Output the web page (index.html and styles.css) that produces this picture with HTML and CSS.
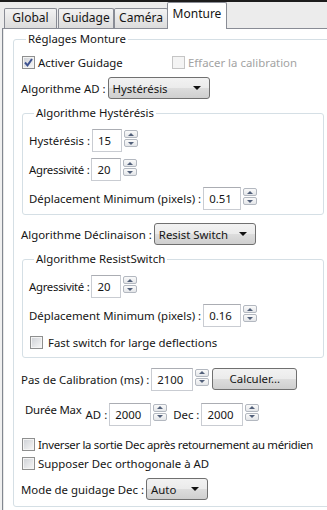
FILE: index.html
```html
<!DOCTYPE html>
<html lang="fr">
<head>
<meta charset="utf-8">
<title>Monture</title>
<link rel="stylesheet" href="styles.css">
</head>
<body>
<div class="window">
  <div class="topline"></div>
  <div class="tabbar">
    <div class="tab t-global">Global</div>
    <div class="tab t-guidage">Guidage</div>
    <div class="tab t-camera">Caméra</div>
    <div class="tab t-monture active">Monture</div>
  </div>
  <div class="pane">
    <fieldset class="group outer">
      <legend>Réglages Monture</legend>

      <div class="chkrow r-activer">
        <label class="chk c-first"><span class="box"><svg width="11" height="11" viewBox="0 0 11 11"><path d="M2 5.5 L4.5 8.3 L9 2" fill="none" stroke="#3d5290" stroke-width="2"/></svg></span>Activer Guidage</label>
        <label class="chk disabled"><span class="box"></span>Effacer la calibration</label>
      </div>

      <div class="row r-ad">
        <span class="lbl">Algorithme AD :</span>
        <div class="combo w-ad"><span>Hystérésis</span><span class="arrow"></span></div>
      </div>

      <fieldset class="group inner g-hyst">
        <legend>Algorithme Hystérésis</legend>
        <div class="row r-first">
          <span class="lbl">Hystérésis :</span>
          <div class="spin"><div class="field w30">15</div><div class="sbtns"><span class="sb up"></span><span class="sb down"></span></div></div>
        </div>
        <div class="row r-next">
          <span class="lbl tight">Agressivité :</span>
          <div class="spin"><div class="field w30">20</div><div class="sbtns"><span class="sb up"></span><span class="sb down"></span></div></div>
        </div>
        <div class="row r-next">
          <span class="lbl">Déplacement Minimum (pixels) :</span>
          <div class="spin"><div class="field w38">0.51</div><div class="sbtns"><span class="sb up"></span><span class="sb down"></span></div></div>
        </div>
      </fieldset>

      <div class="row r-dec">
        <span class="lbl">Algorithme Déclinaison :</span>
        <div class="combo w-dec"><span>Resist Switch</span><span class="arrow"></span></div>
      </div>

      <fieldset class="group inner g-resist">
        <legend>Algorithme ResistSwitch</legend>
        <div class="row r-first">
          <span class="lbl tight">Agressivité :</span>
          <div class="spin"><div class="field w30">20</div><div class="sbtns"><span class="sb up"></span><span class="sb down"></span></div></div>
        </div>
        <div class="row r-next">
          <span class="lbl">Déplacement Minimum (pixels) :</span>
          <div class="spin"><div class="field w38">0.16</div><div class="sbtns"><span class="sb up"></span><span class="sb down"></span></div></div>
        </div>
        <div class="chkrow r-fast">
          <label class="chk wide"><span class="box"></span>Fast switch for large deflections</label>
        </div>
      </fieldset>

      <div class="row r-pas">
        <span class="lbl">Pas de Calibration (ms) :</span>
        <div class="spin"><div class="field w42">2100</div><div class="sbtns"><span class="sb up"></span><span class="sb down"></span></div></div>
        <div class="button">Calculer...</div>
      </div>

      <div class="row r-duree">
        <span class="lbl duree">Durée Max</span>
        <span class="lbl">AD :</span>
        <div class="spin"><div class="field w42">2000</div><div class="sbtns"><span class="sb up"></span><span class="sb down"></span></div></div>
        <span class="lbl dec">Dec :</span>
        <div class="spin"><div class="field w42">2000</div><div class="sbtns"><span class="sb up"></span><span class="sb down"></span></div></div>
      </div>

      <div class="chkrow r-inv">
        <label class="chk narrow"><span class="box"></span>Inverser la sortie Dec après retournement au méridien</label>
      </div>
      <div class="chkrow r-sup">
        <label class="chk"><span class="box"></span>Supposer Dec orthogonale à AD</label>
      </div>

      <div class="row r-mode">
        <span class="lbl">Mode de guidage Dec :</span>
        <div class="combo w-mode"><span>Auto</span><span class="arrow"></span></div>
      </div>
    </fieldset>
  </div>
</div>
</body>
</html>
```
FILE: styles.css
```css
* { box-sizing: border-box; }

html, body {
  margin: 0;
  padding: 0;
}

body {
  width: 327px;
  height: 510px;
  overflow: hidden;
  background: #f0f0f0;
  font-family: "Noto Sans", "Open Sans", sans-serif;
  font-size: 11.4px;
  color: #151515;
}

.window {
  width: 327px;
  height: 510px;
  overflow: hidden;
}

.topline {
  height: 2px;
  background: #1c1c1c;
}

.tabbar {
  height: 26px;
  display: flex;
  align-items: flex-end;
  background: #ececec;
}

.tab {
  height: 20px;
  line-height: 18px;
  text-align: center;
  border: 1px solid #898c95;
  border-bottom: none;
  background: linear-gradient(#f3f3f3, #e7e7e7 50%, #dcdcdc);
  border-radius: 2px 2px 0 0;
  font-size: 12px;
}

.t-global { margin-left: 4px; width: 53px; }
.t-guidage { margin-left: 1px; width: 56px; }
.t-camera { width: 54px; }

.tab.active {
  position: relative;
  z-index: 1;
  margin-left: -1px;
  width: 60px;
  height: 27px;
  line-height: 22px;
  margin-bottom: -1px;
  background: #ffffff;
}

.pane {
  margin-left: 2px;
  height: 490px;
  background: #ffffff;
  border-top: 1px solid #898c95;
  border-left: 1px solid #828790;
  box-shadow: inset 1px 0 0 #e8e8e8;
}

fieldset.group {
  border: 1px solid #d5dfe5;
  border-radius: 3px;
  min-width: 0;
}

fieldset.group > legend {
  padding: 0 2px;
  margin-left: 5px;
  line-height: 16px;
}

fieldset.outer {
  margin: 2px 0 0 10px;
  width: 340px;
  padding: 7px 0 6px 7px;
}

fieldset.inner {
  margin: 6px 0 0 1px;
  width: 302px;
  padding: 8px 0 4px 6px;
}

fieldset.g-resist { padding-bottom: 7px; }

.row {
  display: flex;
  align-items: center;
  height: 23px;
}

.chkrow {
  display: flex;
  align-items: center;
  height: 16px;
}

.r-ad { margin-top: 7px; height: 22px; }
.r-next { margin-top: 6px; }
.r-dec { margin-top: 8px; height: 22px; }
.r-fast { margin-top: 7px; }
.r-pas { margin-top: 10px; height: 22px; }
.r-duree { margin-top: 12px; height: 24px; }
.r-inv { margin-top: 10px; }
.r-sup { margin-top: 3px; }
.r-mode { margin-top: 7px; height: 22px; }

.lbl {
  white-space: nowrap;
  margin-right: 2px;
}

.lbl.tight { letter-spacing: -0.3px; }

.lbl.duree {
  margin-left: 4px;
  margin-right: 4px;
  margin-bottom: 9px;
  letter-spacing: -0.2px;
}

.lbl.dec {
  margin-left: 6px;
}

.chk {
  display: flex;
  align-items: center;
  white-space: nowrap;
}

.chk.narrow { letter-spacing: -0.32px; }

.c-first { width: 150px; }

.box {
  width: 13px;
  height: 13px;
  margin-left: 1px;
  margin-right: 3px;
  border: 1px solid #8e8f8f;
  background: linear-gradient(135deg, #cdd0d5, #f8f8f8);
  box-shadow: inset 0 0 0 1px #f4f4f4;
  display: flex;
  align-items: center;
  justify-content: center;
}

.chk.wide .box { margin-right: 5px; }

.chk.disabled { color: #a3a3a3; }
.chk.disabled .box {
  border-color: #c5c5c5;
  background: #f4f4f4;
  box-shadow: none;
}

.combo {
  height: 22px;
  display: flex;
  align-items: center;
  justify-content: space-between;
  padding: 0 8px 0 4px;
  border: 1px solid #707070;
  border-radius: 3px;
  background: linear-gradient(#f2f2f2 0%, #ebebeb 50%, #dddddd 50%, #cfcfcf 100%);
  white-space: nowrap;
}

.arrow {
  width: 0;
  height: 0;
  border-left: 4px solid transparent;
  border-right: 4px solid transparent;
  border-top: 4px solid #111;
}

.w-ad { width: 102px; }
.w-dec { width: 102px; }
.w-mode { width: 62px; }

.spin {
  display: flex;
  align-items: flex-start;
  height: 23px;
}

.field {
  height: 23px;
  line-height: 21px;
  padding-left: 5px;
  border: 1px solid #c9ccd2;
  border-top-color: #abadb3;
  background: #fff;
}

.w30 { width: 30px; }
.w38 { width: 38px; }
.w42 { width: 42px; }

.sbtns {
  margin-left: 2px;
  margin-top: 1px;
  display: flex;
  flex-direction: column;
  gap: 1px;
}

.sb {
  width: 14px;
  height: 8px;
  border: 1px solid #b3b8c0;
  border-radius: 2px;
  background: linear-gradient(#fafafa, #e4e6e9);
  display: flex;
  align-items: center;
  justify-content: center;
}

.sb::after {
  content: "";
  width: 0;
  height: 0;
  border-left: 3px solid transparent;
  border-right: 3px solid transparent;
}

.sb.up::after { border-bottom: 3px solid #52607a; }
.sb.down::after { border-top: 3px solid #52607a; }

.button {
  margin-left: 3px;
  width: 85px;
  height: 22px;
  border: 1px solid #707070;
  border-radius: 3px;
  background: linear-gradient(#f2f2f2 0%, #ebebeb 50%, #dddddd 50%, #cfcfcf 100%);
  text-align: center;
  line-height: 20px;
}
```
